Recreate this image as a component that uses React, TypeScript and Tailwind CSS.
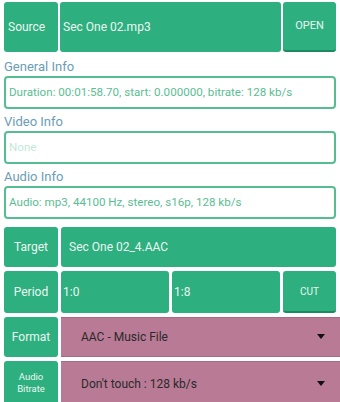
const Label = ({ children }: { children: React.ReactNode }) => (
  <div className="w-[54px] shrink-0 rounded-[3px] bg-[#2daf7f] flex items-center justify-center text-[12px] text-[#eaf7f1]">
    {children}
  </div>
);

const InfoBox = ({ title, text, muted }: { title: string; text: string; muted?: boolean }) => (
  <div className="flex flex-col">
    <div className="h-[20px] flex items-end text-[13px] leading-none text-[#6a9db6] pb-[2px]">{title}</div>
    <div
      className={
        "h-[33px] mt-[1px] rounded-[4px] border-2 border-[#55bd92] flex items-center px-[3px] text-[11.6px] " +
        (muted ? "text-[#c3e8d8]" : "text-[#5bbd93]")
      }
    >
      {text}
    </div>
  </div>
);

const Caret = () => (
  <svg width="10" height="6" viewBox="0 0 10 6" className="shrink-0">
    <path d="M1 0 H9 L5 5 Z" fill="#111" />
  </svg>
);

export default function App() {
  return (
    <div
      className="w-[340px] h-[402px] overflow-hidden bg-white pl-[4px] pr-[4px] pt-[2px]"
      style={{ fontFamily: "Roboto, 'Liberation Sans', sans-serif" }}
    >
      <div className="flex h-[50px] gap-[2px]">
        <div className="w-[54px] shrink-0 rounded-[3px] bg-[#2daf7f] flex items-center pl-[4px] text-[12px] text-[#eaf7f1]">
          Source
        </div>
        <div className="flex-1 rounded-[3px] bg-[#2daf7f] flex items-center pl-[3px] text-[12px] text-[#eaf7f1]">
          Sec One 02.mp3
        </div>
        <div className="w-[53px] shrink-0 rounded-[3px] bg-[#2daf7f] border-b-2 border-[#1d8a5f] flex items-center justify-center text-[11px] text-[#eaf7f1]">
          OPEN
        </div>
      </div>

      <div className="flex flex-col gap-[1px] mt-[3px]">
        <InfoBox title="General Info" text="Duration: 00:01:58.70, start: 0.000000, bitrate: 128 kb/s" />
        <InfoBox title="Video Info" text="None" muted />
        <InfoBox title="Audio Info" text="Audio: mp3, 44100 Hz, stereo, s16p, 128 kb/s" />
      </div>

      <div className="flex h-[40px] gap-[3px] mt-[8px]">
        <Label>Target</Label>
        <div className="flex-1 rounded-[3px] bg-[#2daf7f] flex items-center pl-[8px] text-[12px] text-[#eaf7f1]">
          Sec One 02_4.AAC
        </div>
      </div>

      <div className="flex h-[42px] gap-[3px] mt-[4px]">
        <Label>Period</Label>
        <div className="flex-1 rounded-[3px] bg-[#2daf7f] flex items-center pl-[2px] text-[12px] text-[#eaf7f1]">
          1:0
        </div>
        <div className="flex-1 rounded-[3px] bg-[#2daf7f] flex items-center pl-[2px] text-[12px] text-[#eaf7f1]">
          1:8
        </div>
        <div className="w-[53px] shrink-0 rounded-[3px] bg-[#2daf7f] border-b-2 border-[#1d8a5f] flex items-center justify-center text-[10px] text-[#eaf7f1]">
          CUT
        </div>
      </div>

      <div className="flex h-[40px] gap-[3px] mt-[4px] mr-[-4px]">
        <Label>Format</Label>
        <div className="flex-1 bg-[#b87a95] border-t border-b border-[#a86a85] flex items-center pl-[20px] pr-[14px] text-[12px] text-[#2a2a2a]">
          <span className="flex-1">AAC - Music File</span>
          <Caret />
        </div>
      </div>

      <div className="flex h-[44px] gap-[3px] mt-[4px] mr-[-4px]">
        <div className="w-[54px] shrink-0 rounded-[3px] bg-[#2daf7f] flex flex-col items-center justify-center text-[9.5px] leading-[12px] text-[#eaf7f1]">
          <span>Audio</span>
          <span>Bitrate</span>
        </div>
        <div className="flex-1 bg-[#b87a95] border-t border-[#a86a85] flex items-center pl-[20px] pr-[14px] text-[12px] text-[#2a2a2a]">
          <span className="flex-1">Don't touch : 128 kb/s</span>
          <Caret />
        </div>
      </div>
    </div>
  );
}
